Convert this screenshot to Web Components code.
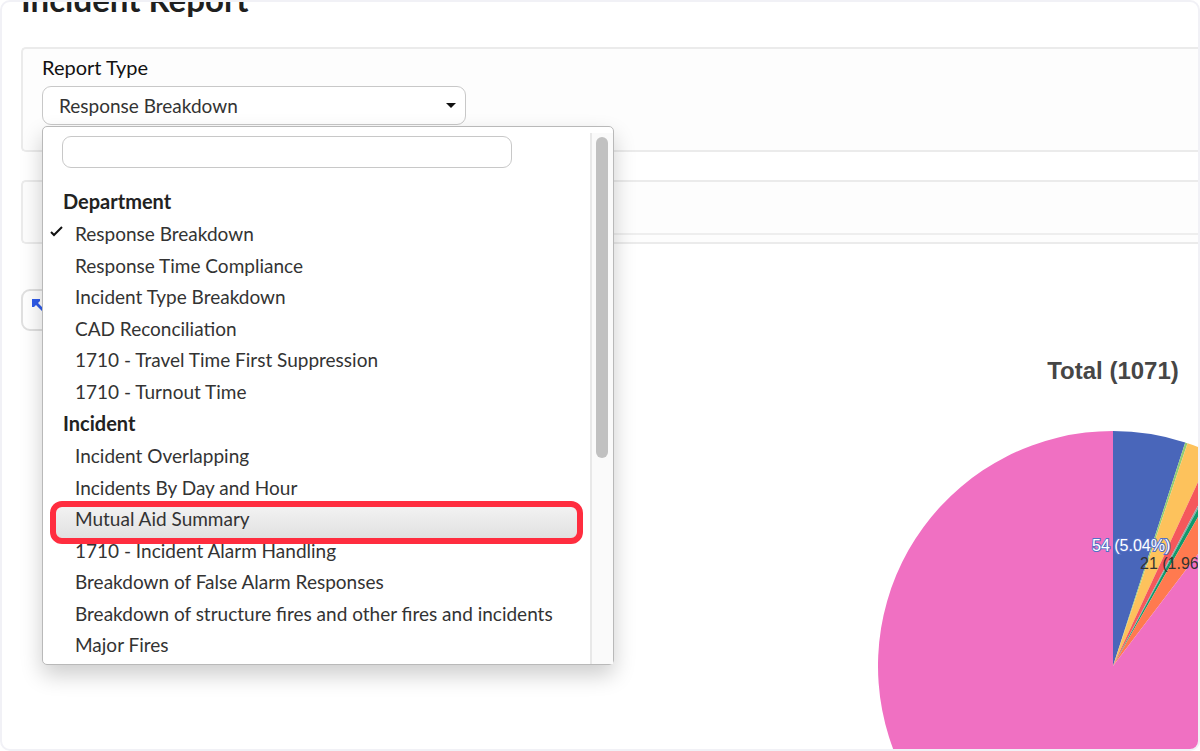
<!DOCTYPE html>
<html lang="en">
<head>
<meta charset="utf-8">
<meta name="viewport" content="width=device-width, initial-scale=1">
<title>Incident Report</title>
<style>
  html, body { margin: 0; height: 100%; }
  body { background: #fff; color: #333; font: 19px/24px Lato, "Liberation Sans", sans-serif; }
</style>
</head>
<body>
<report-frame>
  <span slot="title">Incident Report</span>
  <report-panel>
    <report-picker label="Report Type" value="Response Breakdown">
      <option-group label="Department">
        <option-row selected>Response Breakdown</option-row>
        <option-row>Response Time Compliance</option-row>
        <option-row>Incident Type Breakdown</option-row>
        <option-row>CAD Reconciliation</option-row>
        <option-row>1710 - Travel Time First Suppression</option-row>
        <option-row>1710 - Turnout Time</option-row>
      </option-group>
      <option-group label="Incident">
        <option-row>Incident Overlapping</option-row>
        <option-row>Incidents By Day and Hour</option-row>
        <option-row active>Mutual Aid Summary</option-row>
        <option-row>1710 - Incident Alarm Handling</option-row>
        <option-row>Breakdown of False Alarm Responses</option-row>
        <option-row>Breakdown of structure fires and other fires and incidents</option-row>
        <option-row>Major Fires</option-row>
      </option-group>
    </report-picker>
  </report-panel>
  <report-panel footed></report-panel>
  <expand-button></expand-button>
  <pie-chart heading="Total (1071)"></pie-chart>
</report-frame>

<script>
const define = (name, html, setup) => {
  const template = document.createElement('template');
  template.innerHTML = html;
  customElements.define(name, class extends HTMLElement {
    connectedCallback() {
      if (this.shadowRoot) return;
      const root = this.attachShadow({ mode: 'open' });
      root.append(template.content.cloneNode(true));
      if (setup) setup(this, root);
    }
  });
};

define('report-frame', `
  <style>
    :host { display: block; box-sizing: border-box; height: 100vh; overflow: hidden;
      border: 2px solid #f1f1f6; border-radius: 10px; background: #fff; }
    main { display: flex; flex-direction: column; padding-left: 19px; }
    h1 { margin: -22px 0 29px; font-size: 33px; line-height: 38px; font-weight: 700; color: #1f1f1f; }
  </style>
  <main><h1><slot name="title"></slot></h1><slot></slot></main>`);

define('report-panel', `
  <style>
    :host { display: block; box-sizing: border-box; height: 105px; margin-bottom: 28px; padding: 6px 0 0 19px;
      border: 2px solid #ebebeb; border-right: 0; border-radius: 5px 0 0 5px; background: #fdfdfd; }
    :host([footed]) { height: 64px; margin-bottom: 45px; padding-top: 51px; }
    .rule { display: none; height: 2px; background: #eee; }
    :host([footed]) .rule { display: block; }
  </style>
  <slot></slot><div class="rule"></div>`);

define('report-picker', `
  <style>
    :host { display: block; position: relative; width: 424px; }
    label { display: block; font-size: 20px; color: #111; margin-bottom: 7px; }
    .box { position: relative; }
    select { appearance: none; display: block; box-sizing: border-box; width: 100%; height: 39px;
      margin: 0; padding: 0 32px 0 16px; border: 1px solid #c8c8c8; border-radius: 9px; background: #fff;
      color: #333; font: inherit; }
    .caret { position: absolute; right: 10px; top: 17px; width: 10px; height: 6px; fill: #111; pointer-events: none; }
    .menu { position: absolute; left: 0; top: 71px; z-index: 2; box-sizing: border-box; width: 572px; height: 539px;
      display: flex; padding-top: 6px; border: 1px solid #b9b9b9; border-radius: 5px; background: #fff;
      box-shadow: 0 10px 22px rgba(0,0,0,.2); }
    .list { flex: 1; min-width: 0; padding: 3px 0 0 7px; }
    input { display: block; box-sizing: border-box; width: 450px; height: 32px; margin: 0 0 17px 12px; padding: 0 12px;
      border: 1px solid #c8c8c8; border-radius: 9px; background: #fff; font: inherit; outline: 0; }
    .track { box-sizing: border-box; width: 23px; padding: 4px 4px 0; border-left: 2px solid #e8e8e8; background: #fafafa; }
    .thumb { width: 12px; height: 321px; border-radius: 6px; background: #c1c1c1; }
  </style>
  <label for="report"></label>
  <div class="box">
    <select id="report"></select>
    <svg class="caret" viewBox="0 0 10 6" aria-hidden="true"><path d="M0 0H10L5 5Z"/></svg>
  </div>
  <div class="menu">
    <div class="list">
      <input type="text" aria-label="Search reports">
      <div role="listbox" aria-label="Reports"><slot></slot></div>
    </div>
    <div class="track"><div class="thumb"></div></div>
  </div>`,
  (host, root) => {
    root.querySelector('label').textContent = host.getAttribute('label');
    root.querySelector('select').add(new Option(host.getAttribute('value')));
  });

define('option-group', `
  <style>
    :host { display: block; }
    h2 { margin: 0; padding-left: 13px; font-size: 20px; line-height: 33px; font-weight: 700; color: #222; }
  </style>
  <h2></h2><slot></slot>`,
  (host, root) => {
    host.setAttribute('role', 'group');
    host.setAttribute('aria-label', host.getAttribute('label'));
    root.querySelector('h2').textContent = host.getAttribute('label');
  });

define('option-row', `
  <style>
    :host { display: block; position: relative; box-sizing: border-box; line-height: 32px; padding-left: 25px; color: #333; white-space: nowrap; }
    :host(:nth-child(even)) { line-height: 31px; }
    svg { display: none; position: absolute; left: 0; top: 8px; width: 13px; height: 12px; fill: none; stroke: #111; stroke-width: 2; }
    :host([selected]) svg { display: block; }
    :host([active]) { z-index: 1; }
    .ring { display: none; }
    :host([active]) .ring { display: block; position: absolute; z-index: -1; inset: -2px 7px -9px 0;
      border: 6px solid #ff2d3f; border-radius: 12px; background: linear-gradient(#f2f2f2, #e1e1e1) padding-box; }
  </style>
  <span class="ring"></span>
  <svg viewBox="0 0 13 12" aria-hidden="true"><path d="M1 6L4 9L12 1"/></svg>
  <slot></slot>`,
  (host) => {
    host.setAttribute('role', 'option');
    host.setAttribute('aria-selected', host.hasAttribute('selected'));
  });

define('expand-button', `
  <style>
    :host { display: block; }
    button { display: flex; box-sizing: border-box; width: 64px; height: 42px; padding: 8px 9px;
      border: 2px solid #e0e0e0; border-radius: 9px; background: #fff; }
    svg { width: 24px; height: 24px; fill: #2f5bea; }
  </style>
  <button type="button" aria-label="Expand chart">
    <svg viewBox="0 0 24 24"><path d="M0 0H8V2L6 4L12 10L10 12L4 6L2 8H0Z"/></svg>
  </button>`);

define('pie-chart', `
  <style>
    :host { display: flex; justify-content: flex-end; font-family: "Liberation Sans", Arial, sans-serif; }
    figure { flex: none; width: 470px; margin: 26px -150px 0 0; }
    figcaption { margin-bottom: 46px; text-align: center; font-size: 24px; line-height: 28px; font-weight: 700; color: #464646; }
    svg { display: block; width: 470px; height: 470px; }
    text { font-size: 16px; }
  </style>
  <figure>
    <figcaption></figcaption>
    <svg viewBox="0 0 470 470" role="img" aria-label="Responses by type">
      <g class="slices"></g>
      <text x="214" y="120" fill="#fff" stroke="#5470c6" stroke-width="2" paint-order="stroke">54 (5.04%)</text>
      <text x="262" y="138" fill="#333">21 (1.96%)</text>
    </svg>
  </figure>`,
  (host, root) => {
    root.querySelector('figcaption').textContent = host.getAttribute('heading');
    const slices = [[0, 17.9, '#4966ba'], [17.9, 18.5, '#91cc75'], [18.5, 24.8, '#fdc25c'], [24.8, 27.9, '#f5585c'],
      [27.9, 28.4, '#8da9a8'], [28.4, 29.7, '#109a6c'], [29.7, 37.2, '#ff7a4f'], [37.2, 360, '#f070c2']];
    const at = deg => {
      const a = deg * Math.PI / 180;
      return (235 + 235 * Math.sin(a)) + ' ' + (235 - 235 * Math.cos(a));
    };
    for (const [from, to, color] of slices) {
      const path = document.createElementNS('http://www.w3.org/2000/svg', 'path');
      path.setAttribute('d', 'M235 235L' + at(from) + 'A235 235 0 ' + (to - from > 180 ? 1 : 0) + ' 1 ' + at(to) + 'Z');
      path.setAttribute('fill', color);
      root.querySelector('.slices').append(path);
    }
  });
</script>
</body>
</html>
